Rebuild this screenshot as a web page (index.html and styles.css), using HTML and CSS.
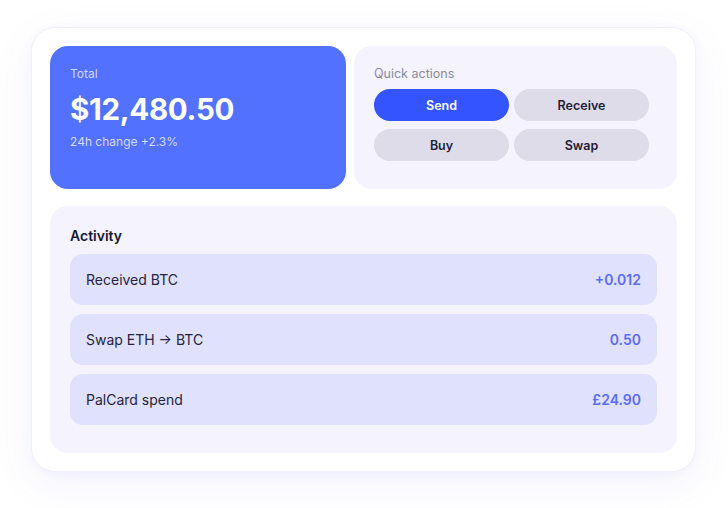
FILE: index.html
```html
<!DOCTYPE html>
<html lang="en">
<head>
<meta charset="utf-8">
<title>Wallet</title>
<link rel="stylesheet" href="styles.css">
</head>
<body>
<div class="stage">
  <div class="panel">
    <div class="top">
      <section class="total">
        <div class="total-label">Total</div>
        <div class="total-amount">$12,480.50</div>
        <div class="total-change">24h change +2.3%</div>
      </section>
      <section class="quick">
        <div class="quick-label">Quick actions</div>
        <div class="buttons">
          <button class="btn btn-primary">Send</button>
          <button class="btn">Receive</button>
          <button class="btn">Buy</button>
          <button class="btn">Swap</button>
        </div>
      </section>
    </div>
    <section class="activity">
      <h2 class="activity-title">Activity</h2>
      <div class="rows">
        <div class="row"><span class="row-name">Received BTC</span><span class="row-value">+0.012</span></div>
        <div class="row"><span class="row-name">Swap ETH → BTC</span><span class="row-value">0.50</span></div>
        <div class="row"><span class="row-name">PalCard spend</span><span class="row-value">£24.90</span></div>
      </div>
    </section>
  </div>
</div>
</body>
</html>
```

FILE: styles.css
```css
* { box-sizing: border-box; }
html, body { margin: 0; padding: 0; background: #ffffff; }
body {
  font-family: Inter, "Noto Sans", "Liberation Sans", sans-serif;
  color: #1c1b33;
}
.stage {
  width: 728px;
  height: 508px;
  padding: 27px 32px 0 31px;
}
.panel {
  width: 665px;
  height: 445px;
  background: #ffffff;
  border: 1px solid #f0effc;
  border-radius: 24px;
  box-shadow: 0 12px 40px rgba(100, 90, 230, 0.08), 0 2px 10px rgba(100, 90, 230, 0.04);
  padding: 18px 18px 18px 18px;
  display: flex;
  flex-direction: column;
  gap: 17px;
}
.top {
  display: grid;
  grid-template-columns: 296px 323px;
  gap: 8px;
  height: 143px;
}
.total {
  background: #5271ff;
  border-radius: 18px;
  padding: 20px 20px;
  color: #ffffff;
}
.total-label {
  font-size: 12px;
  color: rgba(255, 255, 255, 0.72);
  font-weight: 400;
  line-height: 16px;
}
.total-amount {
  font-size: 29.5px;
  font-weight: 700;
  line-height: 36px;
  margin-top: 9px;
  letter-spacing: -0.3px;
}
.total-change {
  font-size: 12px;
  color: rgba(255, 255, 255, 0.75);
  line-height: 16px;
  margin-top: 7px;
}
.quick {
  background: #f4f3fe;
  border-radius: 18px;
  padding: 20px 20px;
}
.quick-label {
  font-size: 12.5px;
  color: #8b8a9b;
  line-height: 16px;
}
.buttons {
  margin-top: 7px;
  display: grid;
  grid-template-columns: 135px 135px;
  gap: 8px 5px;
}
.btn {
  height: 32px;
  border: none;
  border-radius: 16px;
  background: #dedce9;
  font-family: inherit;
  font-size: 12.5px;
  font-weight: 600;
  color: #1f1d3a;
  padding: 0;
}
.btn-primary {
  background: #3354ff;
  color: #ffffff;
}
.activity {
  flex: 1;
  background: #f4f3fe;
  border-radius: 18px;
  padding: 20px 20px 28px 20px;
}
.activity-title {
  margin: 0;
  font-size: 14px;
  font-weight: 600;
  line-height: 20px;
  color: #1a1930;
}
.rows {
  margin-top: 8px;
  display: flex;
  flex-direction: column;
  gap: 9px;
}
.row {
  height: 51px;
  background: #e0e1fd;
  border-radius: 13px;
  display: flex;
  align-items: center;
  justify-content: space-between;
  padding: 0 16px;
}
.row-name {
  font-size: 14px;
  font-weight: 400;
  color: #25243d;
}
.row-value {
  font-size: 14px;
  font-weight: 600;
  color: #5b6cf6;
}
```
